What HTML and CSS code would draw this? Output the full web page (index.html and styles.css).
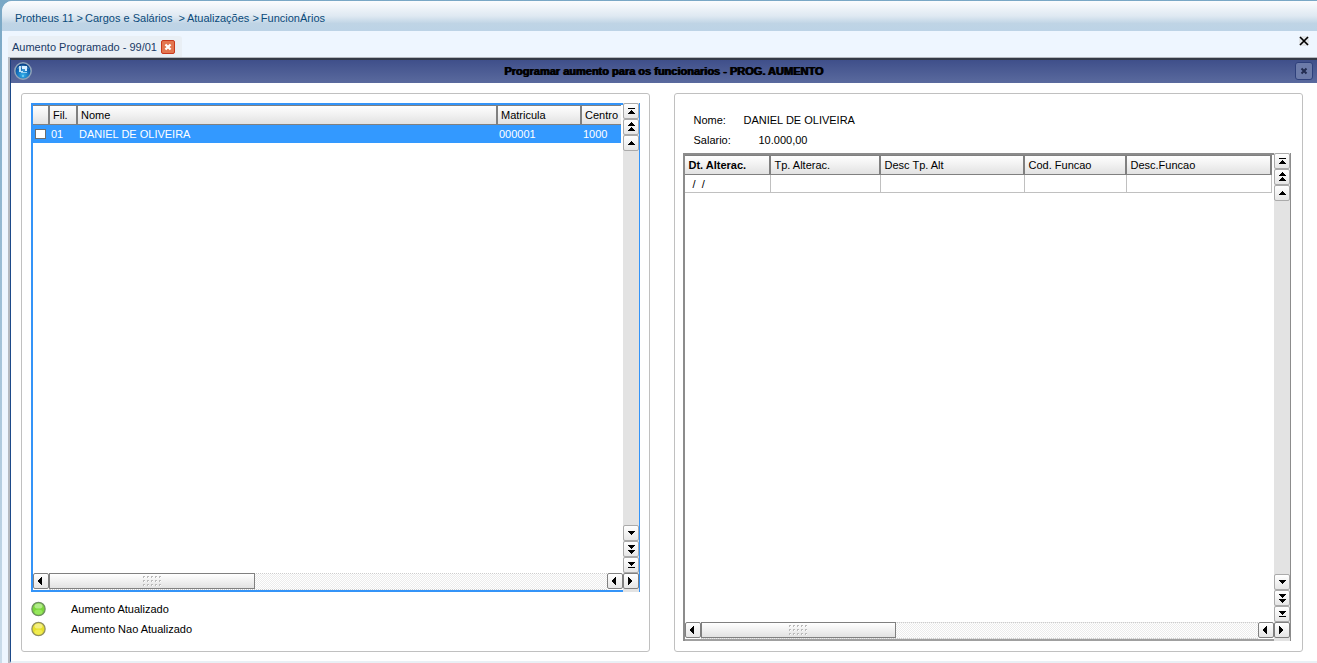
FILE: index.html
```html
<!DOCTYPE html>
<html lang="pt-BR">
<head>
<meta charset="utf-8">
<title>Protheus 11 - Aumento Programado</title>
<link rel="stylesheet" href="styles.css">
</head>
<body>
<svg class="defs" aria-hidden="true">
  <symbol id="up" viewBox="0 0 14 14"><path d="M7 5h1v1h1v1h1v1h1v1H4V8h1V7h1V6h1z"/></symbol>
  <symbol id="up2" viewBox="0 0 14 14"><path d="M7 2h1v1h1v1h1v1h1v1H4V5h1V4h1V3h1zM7 7h1v1h1v1h1v1h1v1H4v-1h1V9h1V8h1z"/></symbol>
  <symbol id="top" viewBox="0 0 14 14"><path d="M4 4h7v1H4zM7 6h1v1h1v1h1v1h1v1H4V9h1V8h1V7h1z"/></symbol>
  <symbol id="down" viewBox="0 0 14 14"><path d="M4 5h7v1h-1v1H9v1H8v1H7V8H6V7H5V6H4z"/></symbol>
  <symbol id="down2" viewBox="0 0 14 14"><path d="M4 3h7v1h-1v1H9v1H8v1H7V6H6V5H5V4H4zM4 8h7v1h-1v1H9v1H8v1H7v-1H6v-1H5V9H4z"/></symbol>
  <symbol id="bottom" viewBox="0 0 14 14"><path d="M4 4h7v1h-1v1H9v1H8v1H7V7H6V6H5V5H4zM4 9h7v1H4z"/></symbol>
  <symbol id="left" viewBox="0 0 14 14"><path d="M8 3v8H7v-1H6V9H5V8H4V6h1V5h1V4h1V3z"/></symbol>
  <symbol id="right" viewBox="0 0 14 14"><path d="M4 3v8h1v-1h1V9h1V8h1V6H7V5H6V4H5V3z"/></symbol>
  <symbol id="grip" viewBox="0 0 18 10"><path d="M0 1h18M0 5h18M0 9h18" stroke="#bbb" stroke-width="2" stroke-dasharray="2 2"/><path d="M1 1.500h18M1 5.500h18M1 9.500h18" stroke="#fff" stroke-dasharray="1 3"/></symbol>
</svg>
<div class="shell">
  <nav class="crumbs" aria-label="Caminho">
    <a href="#">Protheus 11 &gt;</a><a href="#">Cargos e Salários&nbsp; &gt;</a><a href="#">Atualizações &gt;</a><a href="#">FuncionÁrios</a>
  </nav>
  <div class="tabs">
    <div class="tab">
      <a href="#">Aumento Programado - 99/01</a>
      <button class="tab-close" type="button" aria-label="Fechar aba">
        <svg viewBox="0 0 14 14" width="14" height="14"><path d="M4 4l6 6M10 4l-6 6" stroke="#fff" stroke-width="2.600"/></svg>
      </button>
    </div>
    <button class="close-all" type="button" aria-label="Fechar">
      <svg viewBox="0 0 10 10" width="10" height="10"><path d="M1 1l8 8M9 1l-8 8" stroke="#000" stroke-width="1.700"/></svg>
    </button>
  </div>
  <main class="window">
    <header class="titlebar">
      <svg class="logo" viewBox="0 0 18 18" width="18" height="18">
        <defs><radialGradient id="orb" cx=".5" cy=".75" r=".7"><stop offset="0" stop-color="#35b0ea"/><stop offset=".6" stop-color="#1268b4"/><stop offset="1" stop-color="#0b3f83"/></radialGradient></defs>
        <circle cx="9" cy="9" r="8.200" fill="url(#orb)" stroke="#8fa3b8" stroke-width="1.500"/>
        <path d="M3 7a6.500 5.500 0 0 1 12 0q-6-3-12 0z" fill="#7fb9e2" opacity=".55"/>
        <path d="M5 4h2v5h2v1H5z" fill="#c4e4f8"/><path d="M8 4h5v5H8z" fill="#d8efff"/><path d="M8 7h3v2H8z" fill="#3b93cf"/><path d="M7 10h6v1H7z" fill="#9ad2f2"/><path d="M8 13h2v2H8z" fill="#62c8f4"/>
      </svg>
      <h1>Programar aumento para os funcionarios - PROG. AUMENTO</h1>
      <button class="win-close" type="button" aria-label="Fechar janela">
        <svg viewBox="0 0 16 16" width="16" height="16"><path d="M5.500 5.500l5 5M10.500 5.500l-5 5" stroke="#222c50" stroke-width="2"/></svg>
      </button>
    </header>
    <div class="content">
      <section class="panel panel-left">
        <div class="browse active">
          <div class="view">
            <table class="grid people">
              <colgroup><col class="w-check"><col class="w-fil"><col class="w-name"><col class="w-mat"><col class="w-cost"></colgroup>
              <thead><tr><th></th><th>Fil.</th><th>Nome</th><th>Matricula</th><th>Centro Custo</th></tr></thead>
              <tbody><tr><td class="check"><input type="checkbox" aria-label="Marcar DANIEL DE OLIVEIRA"></td><td>01</td><td>DANIEL DE OLIVEIRA</td><td>000001</td><td>1000</td></tr></tbody>
            </table>
          </div>
          <div class="vscroll">
            <button type="button" aria-label="Primeiro"><svg><use href="#top"/></svg></button>
            <button type="button" aria-label="Página acima"><svg><use href="#up2"/></svg></button>
            <button type="button" aria-label="Acima"><svg><use href="#up"/></svg></button>
            <button class="push" type="button" aria-label="Abaixo"><svg><use href="#down"/></svg></button>
            <button type="button" aria-label="Página abaixo"><svg><use href="#down2"/></svg></button>
            <button type="button" aria-label="Último"><svg><use href="#bottom"/></svg></button>
          </div>
          <div class="hscroll">
            <button type="button" aria-label="Esquerda"><svg><use href="#left"/></svg></button>
            <div class="track"><button class="thumb" type="button" aria-label="Rolagem horizontal"><svg class="grip"><use href="#grip"/></svg></button></div>
            <button type="button" aria-label="Esquerda"><svg><use href="#left"/></svg></button>
          </div>
          <div class="corner"><button type="button" aria-label="Direita"><svg><use href="#right"/></svg></button></div>
        </div>
        <ul class="legend">
          <li><svg viewBox="0 0 16 16" width="16" height="16"><circle cx="7.500" cy="8" r="6.600" fill="#7bd63c" stroke="#6f8f62" stroke-width="1.300"/><ellipse cx="7.500" cy="5" rx="4" ry="2.600" fill="#d6f8bd" opacity=".6"/><ellipse cx="7.500" cy="11" rx="4" ry="2.500" fill="#a2ee69" opacity=".7"/></svg>Aumento Atualizado</li>
          <li><svg viewBox="0 0 16 16" width="16" height="16"><circle cx="7.500" cy="8" r="6.600" fill="#e6e02c" stroke="#929060" stroke-width="1.300"/><ellipse cx="7.500" cy="5" rx="4" ry="2.600" fill="#fbf9ba" opacity=".6"/><ellipse cx="7.500" cy="11" rx="4" ry="2.500" fill="#f5f160" opacity=".7"/></svg>Aumento Nao Atualizado</li>
        </ul>
      </section>
      <section class="panel panel-right">
        <dl class="facts">
          <dt>Nome:</dt><dd>DANIEL DE OLIVEIRA</dd>
          <dt>Salario:</dt><dd class="amount">10.000,00</dd>
        </dl>
        <div class="browse">
          <div class="view">
            <table class="grid history">
              <colgroup><col class="w-date"><col class="w-type"><col class="w-desc"><col class="w-code"><col class="w-role"></colgroup>
              <thead><tr><th class="sorted">Dt. Alterac.</th><th>Tp. Alterac.</th><th>Desc Tp. Alt</th><th>Cod. Funcao</th><th>Desc.Funcao</th></tr></thead>
              <tbody><tr><td>&nbsp;/&nbsp; /</td><td></td><td></td><td></td><td></td></tr></tbody>
            </table>
          </div>
          <div class="vscroll">
            <button type="button" aria-label="Primeiro"><svg><use href="#top"/></svg></button>
            <button type="button" aria-label="Página acima"><svg><use href="#up2"/></svg></button>
            <button type="button" aria-label="Acima"><svg><use href="#up"/></svg></button>
            <button class="push" type="button" aria-label="Abaixo"><svg><use href="#down"/></svg></button>
            <button type="button" aria-label="Página abaixo"><svg><use href="#down2"/></svg></button>
            <button type="button" aria-label="Último"><svg><use href="#bottom"/></svg></button>
          </div>
          <div class="hscroll">
            <button type="button" aria-label="Esquerda"><svg><use href="#left"/></svg></button>
            <div class="track"><button class="thumb" type="button" aria-label="Rolagem horizontal"><svg class="grip"><use href="#grip"/></svg></button></div>
            <button type="button" aria-label="Esquerda"><svg><use href="#left"/></svg></button>
          </div>
          <div class="corner"><button type="button" aria-label="Direita"><svg><use href="#right"/></svg></button></div>
        </div>
      </section>
    </div>
  </main>
</div>
</body>
</html>
```
FILE: styles.css
```css
* { box-sizing: border-box; }

body {
  display: flex;
  min-height: 100vh;
  margin: 0;
  padding: 1px 0 0 2px;
  background: linear-gradient(#79a7c5, #cbdcea);
  color: #000;
  font: 11px/14px "Liberation Sans", Arial, sans-serif;
}

button {
  display: flex;
  align-items: center;
  justify-content: center;
  padding: 0;
  font: inherit;
}

a { text-decoration: none; }

.defs { position: absolute; width: 0; height: 0; }

.shell {
  display: flex;
  flex: 1;
  flex-direction: column;
  min-width: 0;
  overflow: hidden;
  border-top-left-radius: 10px;
  background: #eef6ff;
}

/* Breadcrumb and tabs */
.crumbs {
  display: flex;
  gap: 2px;
  padding: 10px 13px 6px;
  background: linear-gradient(#fbfcfe, #dfe9f2 50%, #bfd4e5 75%, #bcd3e6);
}

.crumbs a, .tab a { color: #0a4a7a; }

.tabs {
  display: flex;
  align-items: flex-start;
  justify-content: space-between;
  padding: 5px 8px 0 6px;
}

.tab {
  display: flex;
  align-items: center;
  gap: 4px;
  height: 21px;
  padding: 0 7px 0 4px;
  border-radius: 3px 3px 0 0;
  background: #e9eff5;
}

.tab a { color: #1a3a66; }

.tab-close {
  width: 14px;
  height: 14px;
  border: 1px solid #c9391d;
  border-radius: 2px;
  background: #e37650;
}

.close-all {
  width: 10px;
  height: 10px;
  border: 0;
  border-radius: 2px;
  background: #e2e6ea;
}

/* Window frame */
.window {
  display: flex;
  flex: 1;
  flex-direction: column;
  margin-left: 6px;
  border-top: 1px solid #b5b9bf;
  border-left: 2px solid #b5b9bf;
}

.titlebar {
  display: flex;
  align-items: center;
  height: 25px;
  padding: 0 4px 2px 3px;
  border-top: 2px solid #343a46;
  border-left: 1px solid #1d3f7c;
  background: linear-gradient(#3f4f8a, #5a6a9e);
}

.titlebar h1 {
  flex: 1;
  margin: 0;
  font-size: 11px;
  line-height: 14px;
  text-align: center;
  text-shadow: 1px 0 #000;
}

.win-close {
  width: 18px;
  height: 18px;
  border: 1px solid #2e407b;
  border-radius: 3px;
  background: #6c7ba9;
}

.content {
  display: flex;
  flex: 1;
  gap: 24px;
  padding: 10px 14px 9px 10px;
  border-bottom: 2px solid #e9f0f5;
  border-left: 1px solid #1d4a8a;
  background: #fff;
}

.panel {
  display: flex;
  flex: 1;
  flex-direction: column;
  min-width: 0;
  border: 1px solid #c0c0c0;
  border-radius: 3px;
}

.panel-left { padding: 9px; }
.panel-right { padding: 16px 11px 10px 8px; }

/* Data browser */
.browse {
  display: grid;
  flex: 1;
  grid-template: 1fr auto / minmax(0, 1fr) 16px;
  border-right: 1px solid #8c8c8c;
  border-left: 2px solid #8c8c8c;
}

.view {
  overflow: hidden;
  padding-right: 2px;
  border-top: 2px solid #8c8c8c;
}

.hscroll { display: flex; border-bottom: 2px solid #a0a0a0; }
.corner { padding-bottom: 2px; background: #e3e3e3; }

.active, .active .view, .active .hscroll { border-color: #3494f8; }

.active .view { overflow: clip; overflow-clip-margin: content-box; }

.grid {
  border-spacing: 0;
  table-layout: fixed;
}

.people { width: 649px; }
.history { width: 587px; }
.w-check { width: 17px; }
.w-fil { width: 28px; }
.w-name { width: 420px; }
.w-mat { width: 84px; }
.w-cost { width: 100px; }
.w-date { width: 86px; }
.w-type { width: 110px; }
.w-desc { width: 144px; }
.w-code { width: 102px; }
.w-role { width: 145px; }

.grid th, .grid td {
  overflow: hidden;
  text-align: left;
  white-space: nowrap;
}

.grid th {
  height: 20px;
  padding: 0 3px 1px;
  border: solid #808080;
  border-width: 1px 2px 1px 0;
  background: linear-gradient(#fff, #e2e2e2);
  font-weight: normal;
}

.history th { padding-left: 4px; }

.grid th.sorted { font-weight: bold; }

.grid td { height: 18px; padding: 0 1px 1px; }

.people tbody td { background: #3399ff; color: #fff; }
.people td.check { padding: 0 0 0 2px; line-height: 0; }

.check input {
  width: 11px;
  height: 10px;
  margin: 0;
  appearance: none;
  border: 1px solid #6d6d6d;
  background: #fff;
}

.history td {
  padding: 0 5px;
  border: solid #c0c0c0;
  border-width: 0 1px 1px 0;
}

/* Scroll bars */
.vscroll {
  display: flex;
  flex-direction: column;
  background: #e3e3e3;
}

.vscroll button, .hscroll > button, .corner button {
  width: 16px;
  height: 16px;
  border: 1px solid #aaa;
  border-radius: 2px;
  background: linear-gradient(#fff, #e6e6e6);
}

.vscroll svg, .hscroll > button svg, .corner svg {
  flex: none;
  width: 14px;
  height: 14px;
}

.hscroll > button, .corner button { border-color: #808080; }

.vscroll .push { margin-top: auto; }

.track {
  flex: 1;
  border: dotted #ccc;
  border-width: 1px 0;
  background: repeating-conic-gradient(#fff 0 25%, #ececec 0 50%) 0 0 / 2px 2px;
}

.thumb {
  width: 37%;
  height: 16px;
  margin-top: -1px;
  border: 1px solid #808080;
  background: linear-gradient(#fff, #e2e2e2);
}

.panel-right .thumb { width: 35%; }
.grip { width: 18px; height: 10px; }

/* Legend and employee data */
.legend {
  margin: 0;
  padding: 7px 0 3px;
  list-style: none;
}

.legend li {
  display: flex;
  align-items: center;
  gap: 24px;
  height: 20px;
}

.facts {
  display: grid;
  grid-template-columns: 50px 1fr;
  margin: 0;
  padding: 0 11px 3px;
  line-height: 20px;
}

.facts dd { margin: 0; }
.facts .amount { padding-left: 15px; }
```
